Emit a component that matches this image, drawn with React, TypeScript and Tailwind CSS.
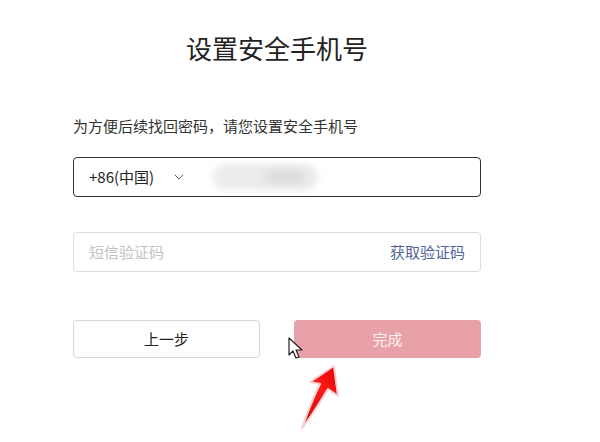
import { ChevronDown } from 'lucide-react';

export default function App() {
  return (
    <div
      className="relative w-[600px] h-[442px] overflow-hidden bg-white"
      style={{ fontFamily: '"Noto Sans CJK SC", "Noto Sans", sans-serif' }}
    >
      <div className="ml-[73px] w-[408px] pt-[29px]">
        {/* Title */}
        <h1 className="text-center text-[26px] leading-[38px] text-[#222]">设置安全手机号</h1>

        <p className="mt-[48px] text-[15px] leading-[22px] text-[#333]">
          为方便后续找回密码，请您设置安全手机号
        </p>

        {/* Phone input */}
        <div className="mt-[20px] h-[40px] border border-[#333] rounded-[4px] flex items-center pl-[15px]">
          <span className="text-[15px] text-[#222]">+86(中国)</span>
          <ChevronDown className="ml-[17px] w-[16px] h-[16px] text-[#666]" strokeWidth={1.5} />
          <div className="relative ml-[26px] w-[105px] h-[26px]">
            <div className="absolute inset-0 rounded-full bg-[#ececec] blur-[3px]" />
            <div className="absolute left-[52px] top-[7px] w-[40px] h-[12px] rounded-full bg-[#dadada] blur-[4px]" />
          </div>
        </div>

        {/* SMS code */}
        <div className="mt-[35px] h-[40px] border border-[#dcdcdc] rounded-[4px] flex items-center justify-between pl-[15px] pr-[15px]">
          <span className="text-[15px] text-[#c4c4c4]">短信验证码</span>
          <span className="text-[15px] text-[#53649a]">获取验证码</span>
        </div>

        {/* Buttons */}
        <div className="mt-[48px] flex gap-[34px]">
          <button className="w-[187px] h-[38px] border border-[#d6d6d6] rounded-[4px] bg-white text-[15px] text-[#222]">
            上一步
          </button>
          <button className="w-[187px] h-[38px] rounded-[4px] bg-[#e8a1a8] text-[15px] text-[#fdf0f1]">
            完成
          </button>
        </div>
      </div>

      {/* Mouse cursor */}
      <svg className="absolute left-[288px] top-[337px]" width="16" height="24" viewBox="0 0 16 24">
        <path d="M1 1 L1 18 L5 14 L8 21 L11 20 L8 13 L14 13 Z" fill="#fff" stroke="#222" strokeWidth="1.2" strokeLinejoin="round" />
      </svg>

      {/* Red arrow annotation */}
      <svg className="absolute left-[292px] top-[362px]" width="54" height="72" viewBox="0 0 54 72">
        <defs>
          <linearGradient id="arr" x1="0" y1="1" x2="1" y2="0">
            <stop offset="0" stopColor="#d40000" />
            <stop offset="0.6" stopColor="#ff1a1a" />
            <stop offset="1" stopColor="#e00000" />
          </linearGradient>
        </defs>
        <path
          d="M42 4 L46 34 L36 27 C28 40 20 54 10 66 C15 52 20 38 28 22 L18 20 Z"
          fill="url(#arr)"
          stroke="#f4d2d2"
          strokeWidth="2"
          strokeLinejoin="round"
        />
      </svg>
    </div>
  );
}
